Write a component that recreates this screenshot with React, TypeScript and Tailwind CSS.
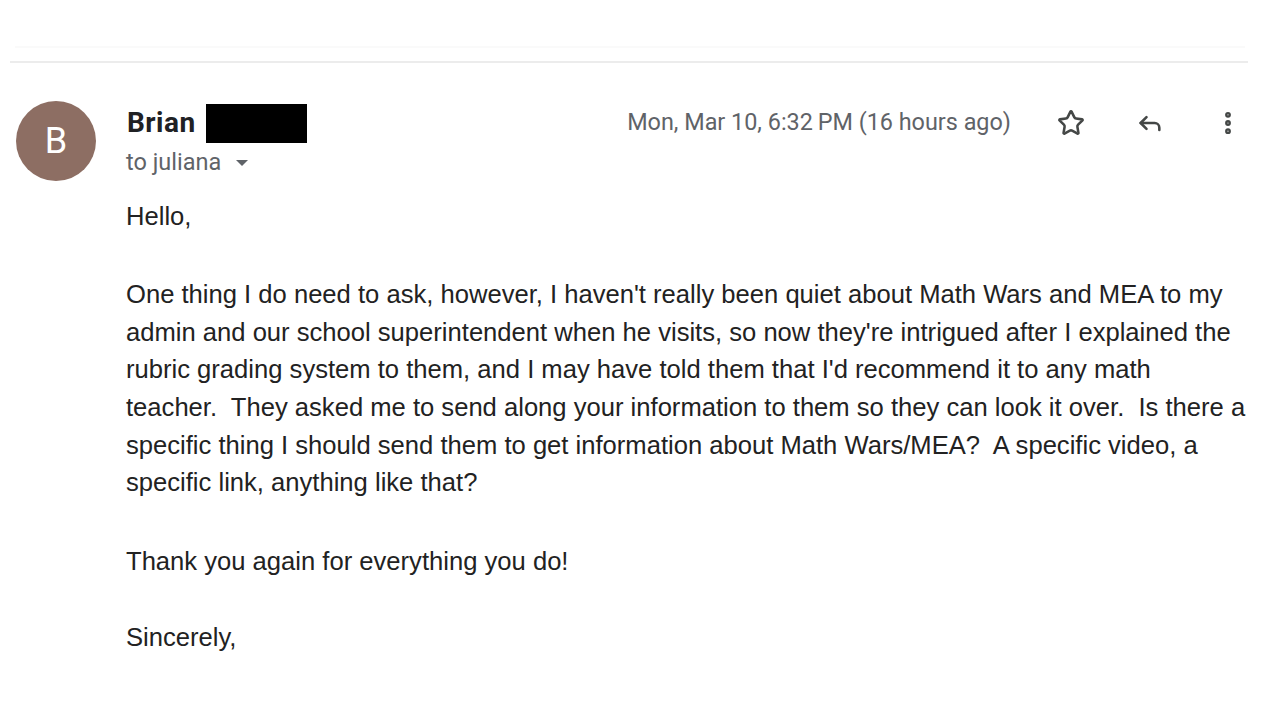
import { Star, Reply, EllipsisVertical } from "lucide-react";

// Single open Gmail message, zoomed screenshot.
export default function App() {
  return (
    <div className="h-[720px] w-[1280px] overflow-hidden bg-white pl-[10px] pr-[38px] pt-[46px] [font-family:Roboto,sans-serif]">
      <div className="ml-[5px] mr-[-3px] h-[2px] bg-[#fafafa]" />
      <div className="mr-[-6px] mt-[13px] h-[2px] bg-[#ececec]" />

      <div className="mt-[38px] flex">
        {/* Avatar */}
        <div className="ml-[6px] flex h-[80px] w-[80px] shrink-0 items-center justify-center rounded-full bg-[#8d6e63] text-[36px] text-white">
          B
        </div>

        <div className="ml-[30px] min-w-0 flex-1">
          <div className="flex items-start">
            <div className="flex-1">
              <div className="flex h-[44px] items-center">
                <span className="ml-[1px] text-[28px] font-bold tracking-[0.5px] text-[#202124]">Brian</span>
                <span className="ml-[10px] h-[39px] w-[101px] bg-black" />
              </div>
              <div className="flex items-center text-[23.5px] text-[#5f6368]">
                to juliana
                <span className="ml-[15px] h-0 w-0 border-x-[6px] border-t-[6px] border-x-transparent border-t-[#5f6368]" />
              </div>
            </div>
            <div className="flex h-[44px] items-center">
              <span className="text-[23.4px] text-[#5f6368]">Mon, Mar 10, 6:32&#8201;PM (16 hours ago)</span>
              <Star className="ml-[46px] h-[28px] w-[28px] text-[#444746]" strokeWidth={2.2} />
              <Reply className="ml-[51px] h-[28px] w-[28px] text-[#444746]" strokeWidth={2.2} />
              <EllipsisVertical className="ml-[50px] h-[28px] w-[28px] text-[#444746]" strokeWidth={3} />
            </div>
          </div>

          <div className="mt-[18px] whitespace-nowrap text-[25.6px] leading-[37.7px] text-[#222] [font-family:'Liberation_Sans',Arial,sans-serif]">
            <p>Hello,</p>
            <p className="mt-[40px]">
              One thing I do need to ask, however, I haven't really been quiet about Math Wars and MEA to my
              <br />
              admin and our school superintendent when he visits, so now they're intrigued after I explained the
              <br />
              rubric grading system to them, and I may have told them that I'd recommend it to any math
              <br />
              teacher.&nbsp; They asked me to send along your information to them so they can look it over.&nbsp; Is there a
              <br />
              specific thing I should send them to get information about Math Wars/MEA?&nbsp; A specific video, a
              <br />
              specific link, anything like that?
            </p>
            <p className="mt-[41px]">Thank you again for everything you do!</p>
            <p className="mt-[38px]">Sincerely,</p>
          </div>
        </div>
      </div>
    </div>
  );
}
